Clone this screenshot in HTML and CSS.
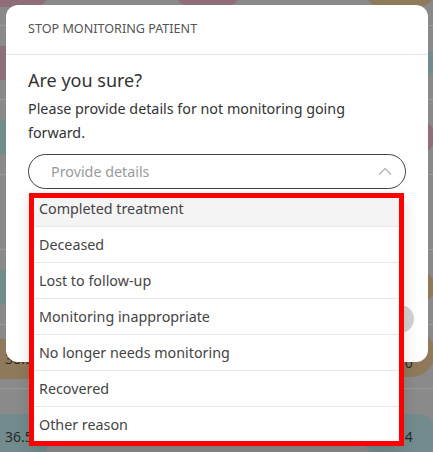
FILE: index.html
```html
<!DOCTYPE html>
<html>
<head>
<meta charset="utf-8">
<link rel="stylesheet" href="styles.css">
</head>
<body>
<div class="bg">
  <div class="row r0"><span class="pill pink l"></span><span class="pill pink m"></span><span class="pill tan r"></span></div>
  <div class="row r1"><span class="pill pink l"></span><span class="pill teal r"></span></div>
  <div class="row r2"><span class="pill teal l"></span><span class="pill pink r"></span></div>
  <div class="row r3"><span class="pill none l"></span><span class="pill none r"></span></div>
  <div class="row r4"><span class="pill teal l"></span><span class="pill tan r"></span></div>
  <div class="row r5"><span class="pill tan l">38.0</span><span class="pill tan r">36.0</span></div>
  <div class="row r6"><span class="pill teal l">36.5</span><span class="pill teal r">36.4</span></div>
</div>

<div class="modal">
  <div class="modal-header">STOP MONITORING PATIENT</div>
  <div class="modal-body">
    <h2 class="title">Are you sure?</h2>
    <p class="desc">Please provide details for not monitoring going forward.</p>
    <div class="select">
      <span class="placeholder">Provide details</span>
      <svg class="chev" width="14" height="8" viewBox="0 0 14 8"><path d="M1 7.5 L7 1.5 L13 7.5" fill="none" stroke="#b0b0b0" stroke-width="1.2"/></svg>
    </div>
    <div class="footer"><span class="btn"></span></div>
    <div class="menu">
      <ul class="list">
        <li class="active">Completed treatment</li>
        <li>Deceased</li>
        <li>Lost to follow-up</li>
        <li>Monitoring inappropriate</li>
        <li>No longer needs monitoring</li>
        <li>Recovered</li>
        <li>Other reason</li>
      </ul>
    </div>
  </div>
</div>
</body>
</html>
```
FILE: styles.css
```css
* { box-sizing: border-box; }
html, body { margin: 0; padding: 0; }
body {
  width: 433px;
  height: 452px;
  overflow: hidden;
  background: #8a8a8a;
  font-family: "Noto Sans", "Open Sans", sans-serif;
  position: relative;
}
.bg { display: flex; flex-direction: column; }
.row {
  display: flex;
  align-items: center;
  justify-content: space-between;
  border-bottom: 1px solid #9a9a9a;
  position: relative;
}
.r0 { height: 26px; align-items: flex-start; }
.r1 { height: 74px; }
.r2 { height: 75px; }
.r3 { height: 75px; }
.r4 { height: 75px; }
.r5 { height: 64px; }
.r6 { height: 70px; border-bottom: none; }
.pill {
  display: flex;
  align-items: center;
  height: 34px;
  border-radius: 17px;
  font-size: 14px;
  color: #2a2a2a;
}
.pill.l { width: 70px; margin-left: -20px; padding-left: 25px; }
.pill.r { width: 70px; margin-right: -2px; padding-left: 20px; }
.r0 .pill { margin-top: -27px; }
.r0 .pill.m { width: 66px; margin-left: 0; }
.pink { background: #8f6d79; }
.teal { background: #728b8c; }
.tan { background: #8e7a5b; }
.none { background: transparent; }
.r5 .pill { height: 40px; margin-top: 4px; }
.r5 .pill.r { margin-top: -8px; height: 48px; border-radius: 24px; padding-top: 20px; }
.r6 .pill { height: 44px; margin-top: 24px; }

.modal {
  position: absolute;
  left: 6px;
  top: 5px;
  width: 422px;
  height: 357px;
  background: #fff;
  border-radius: 12px;
  display: flex;
  flex-direction: column;
}
.modal-header {
  height: 50px;
  display: flex;
  align-items: center;
  padding: 0 22px 2px;
  font-size: 12.6px;
  color: #555;
  border-bottom: 1px solid #e6e6e6;
  flex: none;
}
.modal-body {
  position: relative;
  padding: 12px 22px 0;
  flex: 1;
}
.title {
  margin: 0;
  font-size: 18px;
  font-weight: 400;
  line-height: 27px;
  color: #333;
}
.desc {
  margin: 3px 0 0;
  max-width: 360px;
  font-size: 14.3px;
  line-height: 24px;
  color: #333;
}
.select {
  margin-top: 9px;
  height: 35px;
  border: 1px solid #444;
  border-radius: 18px;
  display: flex;
  align-items: center;
  justify-content: space-between;
  padding: 0 13px 0 22px;
}
.placeholder { font-size: 14.3px; color: #9a9a9a; }
.chev { margin-top: -2px; }
.footer {
  margin-top: 116px;
  display: flex;
  justify-content: flex-end;
  margin-right: -8px;
}
.btn {
  width: 110px;
  height: 28px;
  border-radius: 14px;
  background: #d2d2d2;
}
.menu {
  position: absolute;
  left: 23px;
  top: 138px;
  width: 375px;
  height: 253px;
  border: 5px solid #ff0000;
  background: #fff;
  overflow: hidden;
  box-shadow: 0 4px 14px rgba(0,0,0,0.12);
}
.list {
  list-style: none;
  margin: -7px 0 0;
  padding: 0;
}
.list li {
  height: 36px;
  display: flex;
  align-items: center;
  padding-left: 5px;
  font-size: 14.3px;
  color: #444;
  border-bottom: 1px solid #e8e8e8;
}
.list li.active { background: #f4f4f4; }
```
